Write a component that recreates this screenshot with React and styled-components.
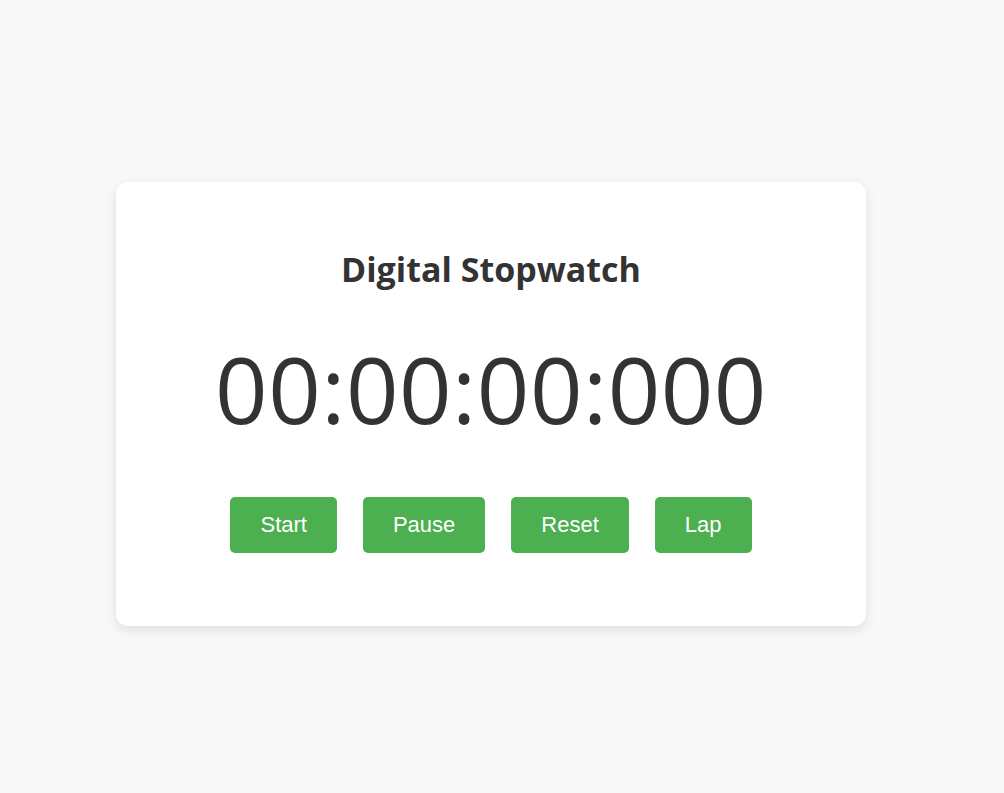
import React from "react";
import styled, { createGlobalStyle } from "styled-components";

const Global = createGlobalStyle`
  body {
    margin: 8px;
    background: #f8f8f8;
    font-family: "Open Sans", "Noto Sans", sans-serif;
  }
`;

const Page = styled.div`
  min-height: 100vh;
  display: flex;
  align-items: center;
  justify-content: center;
  padding-right: 22px;
  box-sizing: border-box;
`;

const Card = styled.div`
  width: 750px;
  height: 444px;
  margin-top: -2px;
  box-sizing: border-box;
  background: #fff;
  border-radius: 12px;
  box-shadow: 0 4px 12px rgba(0, 0, 0, 0.1);
  display: flex;
  flex-direction: column;
  align-items: center;
  padding-top: 63px;
`;

const Title = styled.h1`
  margin: 0;
  font-size: 34px;
  font-weight: 700;
  color: #333;
  line-height: 48px;
`;

const Display = styled.div`
  margin-top: 36px;
  font-size: 92px;
  font-weight: 400;
  letter-spacing: 0.5px;
  color: #333;
  line-height: 120px;
`;

const Buttons = styled.div`
  margin-top: 48px;
  display: flex;
  gap: 26px;
`;

const Button = styled.button`
  border: none;
  border-radius: 5px;
  background: #4caf50;
  color: #fff;
  font-family: "Liberation Sans", Arial, sans-serif;
  font-size: 22px;
  padding: 15px 30px;
  line-height: 26px;
  cursor: pointer;
`;

export default function App() {
  return (
    <>
      <Global />
      <Page>
        <Card>
          <Title>Digital Stopwatch</Title>
          <Display>00:00:00:000</Display>
          <Buttons>
            <Button>Start</Button>
            <Button>Pause</Button>
            <Button>Reset</Button>
            <Button>Lap</Button>
          </Buttons>
        </Card>
      </Page>
    </>
  );
}
